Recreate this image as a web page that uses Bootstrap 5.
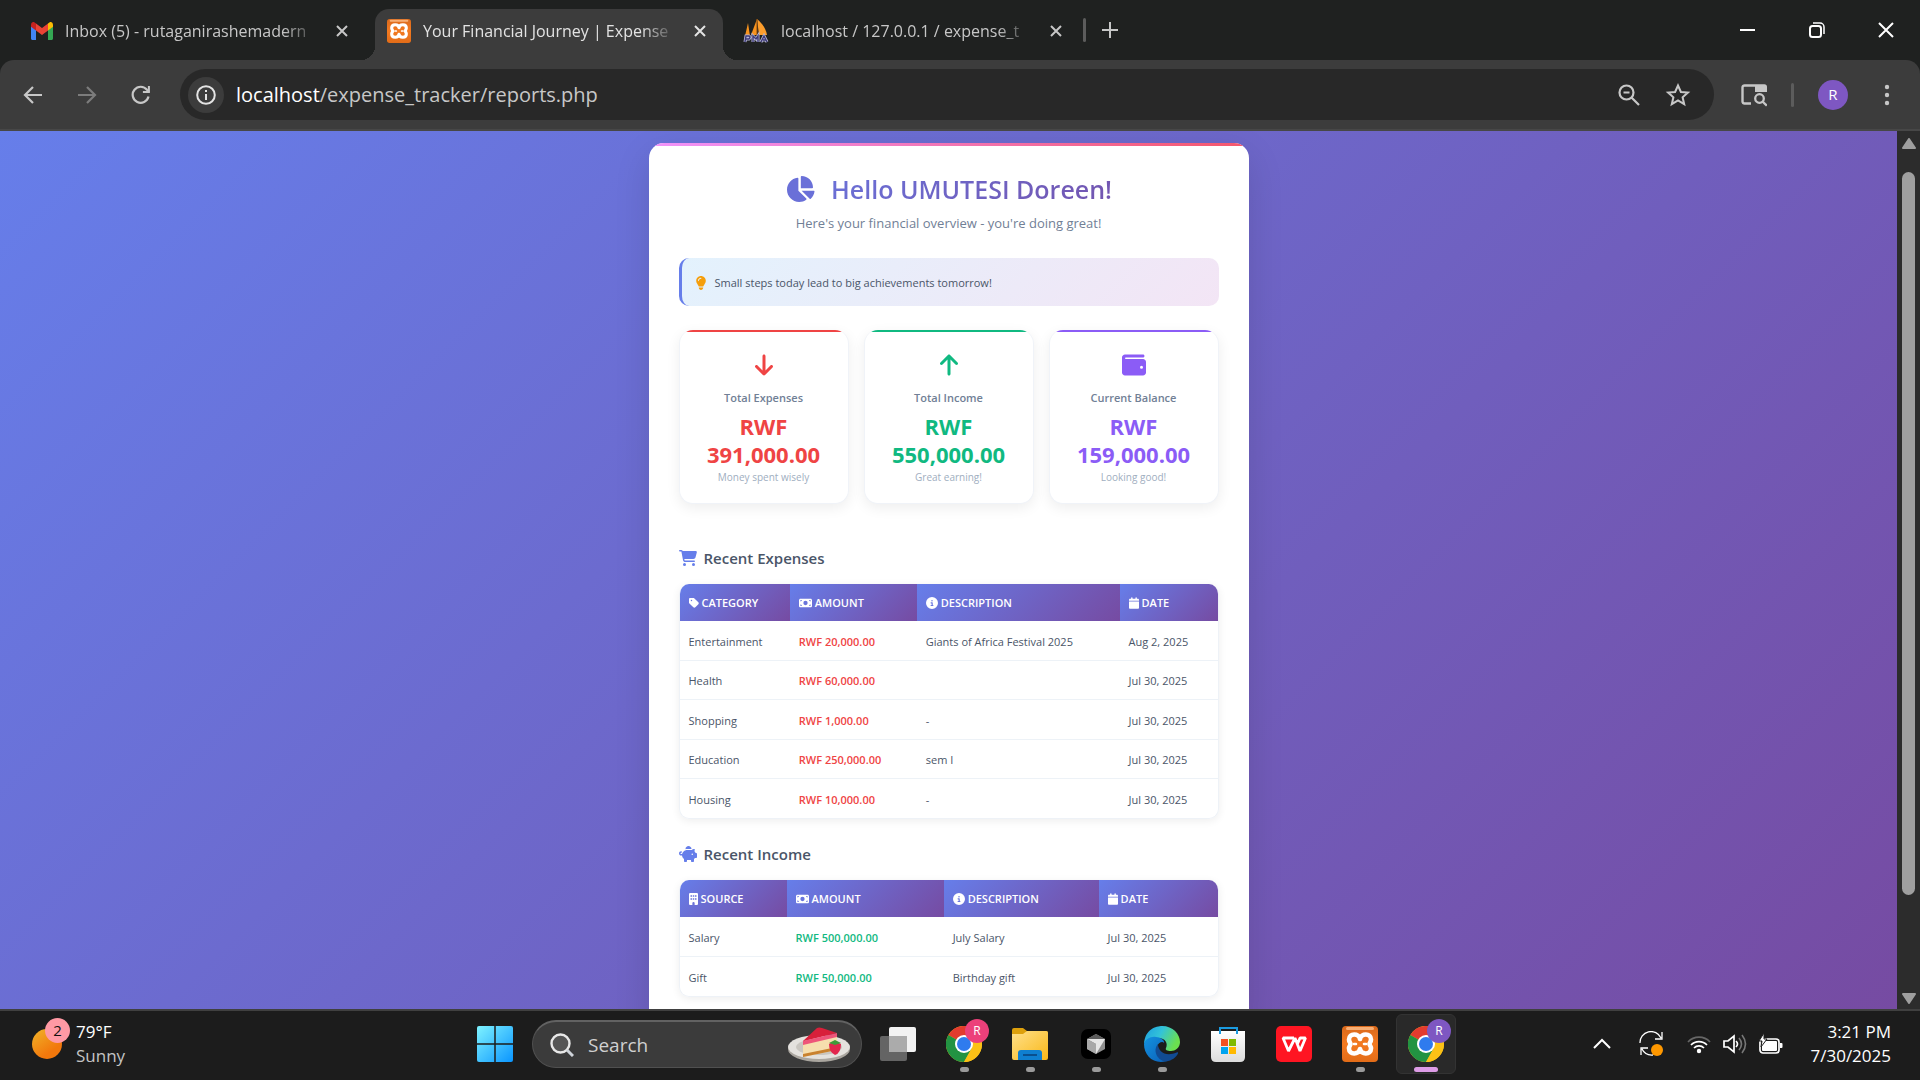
<!DOCTYPE html>
<html lang="en">
<head>
<meta charset="utf-8">
<meta name="viewport" content="width=device-width, initial-scale=1">
<title>Your Financial Journey | Expense Tracker</title>
<link href="https://cdn.jsdelivr.net/npm/bootstrap@5.3.0/dist/css/bootstrap.min.css" rel="stylesheet">
<style>
:root{--grad:linear-gradient(135deg,#667eea 0%,#764ba2 100%)}
body{font-family:"Open Sans","Noto Sans",sans-serif;background:#1f2120;color:#4a5568}
svg{display:block;flex:none}
button{font-family:inherit}
.plain{background:none;border:0;padding:0;color:inherit;display:flex;align-items:center;justify-content:center}

/* browser frame */
.tabstrip{height:60px;color:#c7c7c7;font-size:16px;line-height:24px}
.btab{height:51px;margin-top:9px;padding-bottom:7px;color:inherit;text-decoration:none}
.tab-a{width:375px;padding:0 26px 7px 31px}
.tab-b{width:348px;padding:0 16px 7px 12px;background:#3c3c3c;border-radius:14px 14px 0 0;color:#e3e3e3;position:relative}
.tab-b::before,.tab-b::after{content:"";position:absolute;bottom:0;width:14px;height:14px}
.tab-b::before{left:-14px;background:radial-gradient(circle at 0 0,transparent 14px,#3c3c3c 14px)}
.tab-b::after{right:-14px;background:radial-gradient(circle at 100% 0,transparent 14px,#3c3c3c 14px)}
.tab-c{width:360px;padding:0 20px 7px 20px}
.tabname{flex:1;margin-left:12px;overflow:hidden;white-space:nowrap;-webkit-mask-image:linear-gradient(90deg,#000 calc(100% - 36px),transparent);mask-image:linear-gradient(90deg,#000 calc(100% - 36px),transparent)}
.winctl{width:69px;height:60px;color:#fff}
.toolbar{height:71px;background:#3c3c3c;border-radius:14px 14px 0 0;border-bottom:2px solid #474747;color:#c7c7c7}
.navset{padding:0 12px 0 6px}
.navbtn{width:54px;height:51px}
.omnibox{flex:1;height:51px;border-radius:26px;background:#282828;padding:0 23px 0 8px}
.sitebtn{width:36px;height:36px;border-radius:50%;background:#3c3c3c;color:#e3e3e3}
.url{font-size:20px;line-height:26px;color:#c7c7c7}
.url span{color:#fff}
.rule{width:3px;height:24px;border-radius:2px;background:#5c5c5c}
.toolset{padding:0 30px 0 27px;gap:24px}
.toolset .more{margin-left:12px}
.avatar{width:30px;height:30px;border-radius:50%;background:#7e57c2;color:#fff;font-size:15px}

/* report page */
.view{background:var(--grad);min-height:0;overflow:hidden;padding-top:12px}
.sheet{width:600px;max-width:100%;background:#fff;border-radius:15px 15px 0 0;overflow:hidden;box-shadow:0 12px 36px rgba(0,0,0,.12)}
.sheet::before{content:"";display:block;height:3px;background:linear-gradient(90deg,#f093fb,#f5576c)}
.inner{padding:24px 30px}
.hello{font-size:25px;line-height:38px;font-weight:600;background:var(--grad);-webkit-background-clip:text;background-clip:text;color:transparent;gap:16px;margin:0}
.sub{font-size:13px;line-height:18px;color:#718096;margin:6px 0 26px}
.tip{height:48px;border-left:3px solid #667eea;border-radius:10px;background:linear-gradient(135deg,#e3f2fd,#f3e5f5);font-size:11px;line-height:16px;padding:1px 0 0 13px;gap:8px;color:#4a5568}
.stats{gap:15px;margin-top:24px}
.stat{flex:1;border:1px solid #f0f3f8;border-top:0;border-radius:14px;overflow:hidden;box-shadow:0 4px 14px rgba(0,0,0,.07);height:174px;background:#fff}
.stat::before{content:"";display:block;height:2px;background:currentColor;margin-bottom:21px}
.stat h2{font-size:11px;line-height:16px;font-weight:600;color:#718096;margin:13px 0 6px}
.stat strong{font-size:22px;line-height:28px;font-weight:700;display:block}
.stat p{font-size:10px;line-height:14px;color:#a0aec0;margin:2px 0 0}
.red{color:#ef4444}.green{color:#10b981}.violet{color:#8b5cf6}
.sect{font-size:15px;line-height:20px;font-weight:600;color:#4a5568;gap:7px;margin:44px 0 16px}
.sect svg{color:#667eea}
.sect.next{margin-top:25px}
.ledger{border-radius:10px;overflow:hidden;box-shadow:0 2px 8px rgba(0,0,0,.07);border:1px solid #eef2f7;border-top:0}
.ledger table{width:100%;table-layout:fixed;border-collapse:separate;border-spacing:0;font-size:11px;line-height:16px;margin:0}
.ledger th{height:37px;padding:0 9px;background:var(--grad);color:#fff;font-size:11px;font-weight:600}
.ledger th span{display:flex;align-items:center;gap:3px}
.ledger td{height:39px;padding:2px 9px 0;white-space:nowrap;border-bottom:1px solid #edf2f7}
.ledger tr:nth-child(odd) td{height:40px}
.ledger tr:last-child td{border-bottom:0;height:39px}
.ledger td:nth-child(2){font-weight:600}
.scroller{width:23px;background:#2c2c2c;padding:7px 0 5px;color:#9f9f9f}
.thumb{width:13px;flex:0 0 83.5%;border-radius:7px;background:#9f9f9f;margin-top:23px}

/* taskbar */
.taskbar{height:72px;background:#1c1c1c;border-top:2px solid #404040;padding-bottom:2px;color:#fff}
.side{flex:1 1 0}
.weather{padding-left:30px;font-size:17px;line-height:24px}
.dim{color:#c4c4c4}
.sun{width:30px;height:30px;border-radius:50%;margin-left:2px;background:linear-gradient(145deg,#f0b429,#f2780c 70%)}
.wtext{margin-left:14px}
.count{position:absolute;left:15px;top:-11px;width:25px;height:25px;border-radius:50%;background:#ff99a4;color:#111;font-size:15px;line-height:25px;text-align:center}
.searchbox{width:330px;height:48px;border-radius:24px;background:#3b3b3b;border:1px solid #505050;border-top:2px solid #626262;padding:0 10px 0 17px;margin:0 3px 0 4px}
.searchbox input{background:none;border:0;outline:0;flex:1;min-width:0;color:#d0d0d0;font-size:19px;margin-left:14px;padding:0}
.searchbox input::placeholder{color:#d0d0d0;opacity:1}
.app{width:60px;height:60px;margin:0 3px;border-radius:6px;position:relative;border:1px solid transparent}
.app.open::after{content:"";position:absolute;bottom:1px;left:50%;margin-left:-4px;width:9px;height:5px;border-radius:3px;background:#9a9a9a}
.app.live{background:#292929;border-color:#333}
.app.live::after{width:24px;margin-left:-12px;background:#dd9ce6}
.who{position:absolute;right:4px;top:4px;width:24px;height:24px;border-radius:50%;font-size:12px;line-height:24px;color:#fff;background:#ec407a;text-align:center}
.live .who{background:#7e57c2}
.tray{padding-right:29px}
.status{gap:12px}
.clock{font-size:17px;line-height:24px;text-align:right;margin-left:27px}
</style>
<script src="https://cdn.jsdelivr.net/npm/bootstrap@5.3.0/dist/js/bootstrap.bundle.min.js"></script>
</head>
<body class="vh-100 d-flex flex-column overflow-hidden">

<svg width="0" height="0" class="position-absolute" aria-hidden="true">
 <defs>
  <linearGradient id="orange" x1="0" y1="0" x2="0" y2="1"><stop offset="0" stop-color="#d9691c"/><stop offset=".5" stop-color="#f47a20"/><stop offset="1" stop-color="#e26c18"/></linearGradient>
  <linearGradient id="win" x1="0" y1="0" x2="1" y2="1"><stop offset="0" stop-color="#7ff3ff"/><stop offset="1" stop-color="#0a95ff"/></linearGradient>
  <linearGradient id="fold" x1="0" y1="0" x2="1" y2="1"><stop offset="0" stop-color="#ffe08a"/><stop offset="1" stop-color="#f9b818"/></linearGradient>
  <linearGradient id="edgeTop" x1="0" y1="0" x2="1" y2=".4"><stop offset="0" stop-color="#1b9de2"/><stop offset=".5" stop-color="#33c3d8"/><stop offset="1" stop-color="#6be04f"/></linearGradient>
  <linearGradient id="edgeLow" x1="0" y1="0" x2="1" y2="1"><stop offset="0" stop-color="#1392e0"/><stop offset="1" stop-color="#0b60b8"/></linearGradient>
  <linearGradient id="bag" x1="0" y1="0" x2="0" y2="1"><stop offset="0" stop-color="#fff"/><stop offset="1" stop-color="#dcdcdc"/></linearGradient>
  <symbol id="i-close" viewBox="0 0 14 14"><path d="M2 2l10 10M12 2L2 12" stroke="currentColor" stroke-width="2" fill="none"/></symbol>
  <symbol id="i-xampp" viewBox="0 0 36 36"><rect width="36" height="36" rx="4" fill="url(#orange)"/><rect x="4" y="1" width="28" height="3" rx="1.5" fill="#ffc08c" opacity=".8"/><path d="M18 13C17 7 7 7 7 13.500c0 2.500 1.500 3 1.500 4.500S7 20 7 22.500c0 6.500 10 6.500 11 .5 1 6 11 6 11-.5 0-2.500-1.500-3-1.500-4.500s1.500-2 1.500-4.500c0-6.500-10-6.500-11-.5z" fill="none" stroke="#fff" stroke-width="4.600" stroke-linejoin="round"/><path d="M12 18h2M22 18h2" stroke="#fff" stroke-width="2.600" stroke-linecap="round"/></symbol>
  <symbol id="i-chrome" viewBox="0 0 36 36"><circle cx="18" cy="18" r="18" fill="#fbc116"/><path d="M18 18L2.400 9A18 18 0 0 1 33.600 9z" fill="#e33b2e"/><path d="M18 18L2.400 9a18 18 0 0 0 15.600 27l8-13.500z" fill="#229342"/><path d="M18 9.500h15.900A18 18 0 0 1 18 36l7.400-13.500z" fill="#fbc116"/><circle cx="18" cy="18" r="9" fill="#fff"/><circle cx="18" cy="18" r="7" fill="#2f7bee"/></symbol>
  <symbol id="i-bill" viewBox="0 0 576 512"><path fill="currentColor" d="M64 64C28.700 64 0 92.700 0 128V384c0 35.300 28.700 64 64 64H512c35.300 0 64-28.700 64-64V128c0-35.300-28.700-64-64-64H64zm64 320H64V320c35.300 0 64 28.700 64 64zM64 192V128h64c0 35.300-28.700 64-64 64zM448 384c0-35.300 28.700-64 64-64v64H448zm64-192c-35.300 0-64-28.700-64-64h64v64zM288 160a96 96 0 1 1 0 192 96 96 0 1 1 0-192z"/></symbol>
  <symbol id="i-info" viewBox="0 0 512 512"><path fill="currentColor" d="M256 512A256 256 0 1 0 256 0a256 256 0 1 0 0 512zM216 336h24V272H216c-13.300 0-24-10.700-24-24s10.700-24 24-24h48c13.300 0 24 10.700 24 24v88h8c13.300 0 24 10.700 24 24s-10.700 24-24 24H216c-13.300 0-24-10.700-24-24s10.700-24 24-24zm40-208a32 32 0 1 1 0 64 32 32 0 1 1 0-64z"/></symbol>
  <symbol id="i-cal" viewBox="0 0 448 512"><path fill="currentColor" d="M96 32V64H48C21.500 64 0 85.500 0 112v48H448V112c0-26.500-21.500-48-48-48H352V32c0-17.700-14.300-32-32-32s-32 14.300-32 32V64H160V32c0-17.700-14.300-32-32-32S96 14.300 96 32zM448 192H0V464c0 26.500 21.500 48 48 48H400c26.500 0 48-21.500 48-48V192z"/></symbol>
 </defs>
</svg>

<header>
 <div class="tabstrip d-flex">
  <a href="#" class="btab tab-a d-flex align-items-center">
   <svg width="22" height="18" viewBox="0 0 22 18"><path d="M0 3v13.500C0 17.300.7 18 1.500 18H5V7z" fill="#4285f4"/><path d="M22 3v13.500c0 .8-.7 1.500-1.500 1.500H17V7z" fill="#34a853"/><path d="M5 1.500v7l6 4.500 6-4.500v-7L11 6z" fill="#ea4335"/><path d="M0 3v1.700l5 3.800v-7L3.600.5C2.100-.6 0 .4 0 3z" fill="#c5221f"/><path d="M22 3v1.700l-5 3.800v-7l1.400-1C19.900-.6 22 .4 22 3z" fill="#fbbc04"/></svg>
   <span class="tabname">Inbox (5) - rutaganirashemadern</span>
   <button class="plain ms-3" aria-label="Close tab"><svg width="14" height="14"><use href="#i-close"/></svg></button>
  </a>
  <a href="#" class="btab tab-b d-flex align-items-center">
   <svg width="24" height="24"><use href="#i-xampp"/></svg>
   <span class="tabname">Your Financial Journey | Expense</span>
   <button class="plain ms-3" aria-label="Close tab"><svg width="14" height="14"><use href="#i-close"/></svg></button>
  </a>
  <a href="#" class="btab tab-c d-flex align-items-center">
   <svg width="26" height="24" viewBox="0 0 26 24"><path d="M5 4L2 17h5z M14 0L8 16h6z" fill="#f7931e"/><path d="M14 0l2 16h8c-1-6-5-12-10-16z" fill="#fb9d2c"/><path d="M14 0v16" stroke="#8a4b0a"/><path d="M2 23l1-6h3q2 1 0 3H3m7 3v-6l3 3 2-3v6m3 0l3-6 3 6m-4-2h3" fill="none" stroke="#b8b8d8" stroke-width="3"/><path d="M2 23l1-6h3q2 1 0 3H3m7 3v-6l3 3 2-3v6m3 0l3-6 3 6m-4-2h3" fill="none" stroke="#3d3a78" stroke-width="1.400"/></svg>
   <span class="tabname">localhost / 127.0.0.1 / expense_t</span>
   <button class="plain ms-3" aria-label="Close tab"><svg width="14" height="14"><use href="#i-close"/></svg></button>
  </a>
  <div class="d-flex align-items-center"><span class="rule"></span>
   <button class="plain ms-3" aria-label="New tab"><svg width="16" height="16" viewBox="0 0 16 16"><path d="M8 0v16M0 8h16" stroke="currentColor" stroke-width="2"/></svg></button></div>
  <div class="d-flex ms-auto">
   <button class="plain winctl" aria-label="Minimize"><svg width="15" height="15"><path d="M0 7h15" stroke="#fff" stroke-width="2"/></svg></button>
   <button class="plain winctl" aria-label="Restore"><svg width="16" height="16" viewBox="0 0 16 16"><rect x="1" y="4" width="11" height="11" rx="2.500" fill="none" stroke="#fff" stroke-width="2"/><path d="M4 1h7a4 4 0 0 1 4 4v7" fill="none" stroke="#fff" stroke-width="1.500"/></svg></button>
   <button class="plain winctl" aria-label="Close"><svg width="16" height="16"><path d="M1 1l14 14M15 1L1 15" stroke="#fff" stroke-width="2"/></svg></button>
  </div>
 </div>
 <div class="toolbar d-flex align-items-center">
  <div class="navset d-flex">
   <button class="plain navbtn" aria-label="Back"><svg width="20" height="20" viewBox="0 0 20 20"><path d="M19 10H2M10 2l-8 8 8 8" fill="none" stroke="currentColor" stroke-width="2.200"/></svg></button>
   <button class="plain navbtn" aria-label="Forward"><svg width="20" height="20" viewBox="0 0 20 20"><path d="M1 10h17M10 2l8 8-8 8" fill="none" stroke="#7c7c7c" stroke-width="2.200"/></svg></button>
   <button class="plain navbtn" aria-label="Reload"><svg width="20" height="20" viewBox="0 0 20 20"><path d="M17.500 11.500A8 8 0 1 1 16 4.800L18 7" fill="none" stroke="currentColor" stroke-width="2.200"/><path d="M18.900 1v7h-7V6h5V1z" fill="currentColor"/></svg></button>
  </div>
  <div class="omnibox d-flex align-items-center">
   <button class="plain sitebtn" aria-label="Site information"><svg width="20" height="20" viewBox="0 0 20 20"><circle cx="10" cy="10" r="8.800" fill="none" stroke="currentColor" stroke-width="2"/><path d="M10 9v6M10 5v2" stroke="currentColor" stroke-width="2"/></svg></button>
   <div class="url ms-2 ps-1"><span>localhost</span>/expense_tracker/reports.php</div>
   <button class="plain ms-auto" aria-label="Zoom"><svg width="24" height="24" viewBox="0 0 24 24"><circle cx="9.500" cy="9.500" r="7" fill="none" stroke="currentColor" stroke-width="2.200"/><path d="M6.500 9.500h6M14.500 14.500L22 22" stroke="currentColor" stroke-width="2.200"/></svg></button>
   <button class="plain ms-4" aria-label="Bookmark"><svg width="26" height="26" viewBox="0 0 26 26"><path d="M13 3.500l2.900 6.500 7 .6-5.300 4.700 1.600 6.900-6.200-3.700-6.200 3.700 1.600-6.900L3.100 10.600l7-.6z" fill="none" stroke="currentColor" stroke-width="2"/></svg></button>
  </div>
  <div class="toolset d-flex align-items-center">
   <button class="plain" aria-label="Side panel"><svg width="26" height="24" viewBox="0 0 26 24"><path d="M10 20.500H3.500c-1 0-2-.7-2-2V4.500c0-1.300 1-2 2-2H14" fill="none" stroke="currentColor" stroke-width="2.400"/><path d="M14 1.300h9.500c1.400 0 2.500 1 2.500 2.500V9H14z" fill="currentColor"/><circle cx="18.500" cy="15.500" r="4.300" fill="none" stroke="currentColor" stroke-width="2.300"/><path d="M21.500 18.500l4.300 4.300" stroke="currentColor" stroke-width="2.300"/></svg></button>
   <span class="rule"></span>
   <button class="plain avatar" aria-label="Profile">R</button>
   <button class="plain more" aria-label="Menu"><svg width="6" height="22"><circle cx="3" cy="3" r="2.200" fill="currentColor"/><circle cx="3" cy="11" r="2.200" fill="currentColor"/><circle cx="3" cy="19" r="2.200" fill="currentColor"/></svg></button>
  </div>
 </div>
</header>

<div class="d-flex flex-fill overflow-hidden">
 <main class="view flex-fill">
  <div class="sheet mx-auto"><div class="inner">
   <h1 class="hello d-flex justify-content-center align-items-center"><svg width="30" height="26" viewBox="0 0 576 512"><path fill="#6a70d8" d="M304 240V16.600c0-9 7-16.600 16-16.600C443.700 0 544 100.300 544 224c0 9-7.600 16-16.600 16H304zM32 272C32 150.700 122.100 50.300 239 34.300c9.200-1.300 17 6.100 17 15.400V288L412.500 444.500c6.700 6.700 6.200 17.700-1.500 23.100C371.800 495.600 323.800 512 272 512C139.500 512 32 404.600 32 272zm526.400 16c9.300 0 16.600 7.800 15.400 17c-7.700 55.900-34.600 105.600-73.900 142.300c-6 5.600-15.400 5.200-21.200-.7L320 288H558.400z"/></svg>Hello UMUTESI Doreen!</h1>
   <p class="sub text-center">Here's your financial overview - you're doing great!</p>
   <div class="tip d-flex align-items-center"><svg width="12" height="14" viewBox="0 0 384 512"><path fill="#f59e0b" d="M272 384c9.600-31.900 29.500-59.100 49.200-86.200c5.200-7.100 10.400-14.200 15.400-21.400c19.800-28.500 31.400-63 31.400-100.300C368 78.800 289.200 0 192 0S16 78.800 16 176c0 37.300 11.600 71.900 31.400 100.300c5 7.200 10.200 14.300 15.400 21.400c19.800 27.100 39.700 54.400 49.200 86.200H272zM192 512c44.200 0 80-35.800 80-80V416H112v16c0 44.200 35.800 80 80 80zM112 176c0 8.800-7.200 16-16 16s-16-7.200-16-16c0-61.900 50.100-112 112-112c8.800 0 16 7.200 16 16s-7.200 16-16 16c-44.200 0-80 35.800-80 80z"/></svg>Small steps today lead to big achievements tomorrow!</div>

   <div class="stats d-flex text-center">
    <section class="stat red"><svg class="mx-auto" width="24" height="24" viewBox="0 0 384 512"><path fill="currentColor" d="M169.400 470.600c12.500 12.500 32.800 12.500 45.300 0l160-160c12.500-12.500 12.500-32.800 0-45.300s-32.800-12.500-45.300 0L224 370.800 224 64c0-17.700-14.300-32-32-32s-32 14.300-32 32l0 306.700L54.600 265.400c-12.500-12.500-32.800-12.500-45.300 0s-12.500 32.800 0 45.300l160 160z"/></svg>
     <h2>Total Expenses</h2><strong>RWF<br>391,000.00</strong><p>Money spent wisely</p></section>
    <section class="stat green"><svg class="mx-auto" width="24" height="24" viewBox="0 0 384 512"><path fill="currentColor" d="M214.600 41.400c-12.500-12.500-32.800-12.500-45.300 0l-160 160c-12.500 12.500-12.500 32.800 0 45.300s32.800 12.500 45.300 0L160 141.200V448c0 17.700 14.300 32 32 32s32-14.300 32-32V141.200L329.400 246.600c12.500 12.500 32.800 12.500 45.300 0s12.500-32.800 0-45.300l-160-160z"/></svg>
     <h2>Total Income</h2><strong>RWF<br>550,000.00</strong><p>Great earning!</p></section>
    <section class="stat violet"><svg class="mx-auto" width="24" height="24" viewBox="0 0 512 512"><path fill="currentColor" d="M64 32C28.700 32 0 60.700 0 96V416c0 35.300 28.700 64 64 64H448c35.300 0 64-28.700 64-64V192c0-35.300-28.700-64-64-64H80c-8.800 0-16-7.200-16-16s7.200-16 16-16H448c17.700 0 32-14.300 32-32s-14.300-32-32-32H64zM416 272a32 32 0 1 1 0 64 32 32 0 1 1 0-64z"/></svg>
     <h2>Current Balance</h2><strong>RWF<br>159,000.00</strong><p>Looking good!</p></section>
   </div>

   <h2 class="sect d-flex align-items-center"><svg width="18" height="16" viewBox="0 0 576 512"><path fill="currentColor" d="M0 24C0 10.700 10.700 0 24 0H69.500c22 0 41.500 12.800 50.600 32h411c26.300 0 45.500 25 38.600 50.400l-41 152.300c-8.500 31.400-37 53.300-69.500 53.300H170.700l5.400 28.500c2.200 11.300 12.100 19.500 23.600 19.500H488c13.300 0 24 10.700 24 24s-10.700 24-24 24H199.700c-34.600 0-64.300-24.600-70.700-58.500L77.400 54.500c-.7-3.800-4-6.500-7.900-6.500H24C10.700 48 0 37.300 0 24zM128 464a48 48 0 1 1 96 0 48 48 0 1 1 -96 0zm336-48a48 48 0 1 1 0 96 48 48 0 1 1 0-96z"/></svg>Recent Expenses</h2>
   <div class="ledger"><table>
    <colgroup><col style="width:20.500%"><col style="width:23.600%"><col style="width:37.700%"><col></colgroup>
    <thead><tr>
     <th><span><svg width="10" height="12" viewBox="0 0 448 512"><path fill="currentColor" d="M0 80V229.500c0 17 6.700 33.300 18.700 45.300l176 176c25 25 65.500 25 90.500 0L418.700 317.300c25-25 25-65.500 0-90.500l-176-176c-12-12-28.300-18.700-45.300-18.700H48C21.500 32 0 53.500 0 80zm112 32a32 32 0 1 1 0 64 32 32 0 1 1 0-64z"/></svg>CATEGORY</span></th>
     <th><span><svg width="13" height="12"><use href="#i-bill"/></svg>AMOUNT</span></th>
     <th><span><svg width="12" height="12"><use href="#i-info"/></svg>DESCRIPTION</span></th>
     <th><span><svg width="10" height="12"><use href="#i-cal"/></svg>DATE</span></th></tr></thead>
    <tbody>
     <tr><td>Entertainment</td><td class="red">RWF 20,000.00</td><td>Giants of Africa Festival 2025</td><td>Aug 2, 2025</td></tr>
     <tr><td>Health</td><td class="red">RWF 60,000.00</td><td></td><td>Jul 30, 2025</td></tr>
     <tr><td>Shopping</td><td class="red">RWF 1,000.00</td><td>-</td><td>Jul 30, 2025</td></tr>
     <tr><td>Education</td><td class="red">RWF 250,000.00</td><td>sem I</td><td>Jul 30, 2025</td></tr>
     <tr><td>Housing</td><td class="red">RWF 10,000.00</td><td>-</td><td>Jul 30, 2025</td></tr>
    </tbody></table></div>

   <h2 class="sect next d-flex align-items-center"><svg width="18" height="16" viewBox="0 0 576 512"><path fill="currentColor" d="M400 96l0 .7c-5.300-.4-10.600-.7-16-.7H256c-16.500 0-32.500 2.100-47.800 6c-.1-2-.2-4-.2-6c0-53 43-96 96-96s96 43 96 96zm-16 32c3.500 0 7 .1 10.400 .3c4.200 .3 8.400 .7 12.600 1.300C424.600 109.100 450.800 96 480 96h11.500c10.400 0 18 9.800 15.500 19.900l-13.800 55.200c15.800 14.800 28.700 32.800 37.500 52.900H544c17.700 0 32 14.300 32 32v96c0 17.700-14.300 32-32 32H512c-9.100 12.100-19.900 22.900-32 32v64c0 17.700-14.300 32-32 32H416c-17.700 0-32-14.300-32-32V448H256v32c0 17.700-14.300 32-32 32H192c-17.700 0-32-14.300-32-32V416c-34.900-26.200-58.700-66.300-63.200-112H68c-37.600 0-68-30.400-68-68s30.400-68 68-68h4c13.300 0 24 10.700 24 24s-10.700 24-24 24H68c-11 0-20 9-20 20s9 20 20 20H99.200c12.100-59.800 57.700-107.500 116.300-122.800c12.900-3.400 26.500-5.200 40.500-5.200H384zm64 136a24 24 0 1 0 -48 0 24 24 0 1 0 48 0z"/></svg>Recent Income</h2>
   <div class="ledger"><table>
    <colgroup><col style="width:19.900%"><col style="width:29.200%"><col style="width:28.800%"><col></colgroup>
    <thead><tr>
     <th><span><svg width="9" height="12" viewBox="0 0 384 512"><path fill="currentColor" fill-rule="evenodd" d="M48 0h288q48 0 48 48v416q0 48-48 48h-96v-80q0-48-48-48t-48 48v80H48q-48 0-48-48V48Q0 0 48 0zM64 96v64h64V96zm96 0v64h64V96zm96 0v64h64V96zM64 224v64h64v-64zm96 0v64h64v-64zm96 0v64h64v-64z"/></svg>SOURCE</span></th>
     <th><span><svg width="13" height="12"><use href="#i-bill"/></svg>AMOUNT</span></th>
     <th><span><svg width="12" height="12"><use href="#i-info"/></svg>DESCRIPTION</span></th>
     <th><span><svg width="10" height="12"><use href="#i-cal"/></svg>DATE</span></th></tr></thead>
    <tbody>
     <tr><td>Salary</td><td class="green">RWF 500,000.00</td><td>July Salary</td><td>Jul 30, 2025</td></tr>
     <tr><td>Gift</td><td class="green">RWF 50,000.00</td><td>Birthday gift</td><td>Jul 30, 2025</td></tr>
    </tbody></table></div>
  </div></div>
 </main>
 <div class="scroller d-flex flex-column align-items-center">
  <svg width="14" height="11"><path d="M7 1l6 9H1z" fill="currentColor" stroke="currentColor" stroke-width="2" stroke-linejoin="round"/></svg>
  <div class="thumb"></div>
  <svg class="mt-auto" width="14" height="11"><path d="M7 10L1 1h12z" fill="currentColor" stroke="currentColor" stroke-width="2" stroke-linejoin="round"/></svg>
 </div>
</div>

<footer class="taskbar d-flex align-items-center">
 <div class="side weather d-flex align-items-center"><div class="position-relative"><div class="sun"></div><span class="count">2</span></div><div class="wtext"><div>79°F</div><div class="dim">Sunny</div></div></div>
 <div class="d-flex align-items-center">
  <button class="plain app" aria-label="Start"><svg width="36" height="36"><rect width="36" height="36" rx="2" fill="url(#win)"/><path d="M18 0v36M0 18h36" stroke="#1c1c1c" stroke-width="1.500"/></svg></button>
  <div class="searchbox d-flex align-items-center">
   <svg width="24" height="24" viewBox="0 0 24 24"><circle cx="10.500" cy="10.500" r="9" fill="#555" stroke="#e8e8e8" stroke-width="2.400"/><path d="M17 17l6 6" stroke="#cfd4da" stroke-width="3"/></svg>
   <input type="text" placeholder="Search" aria-label="Search">
   <svg width="64" height="36" viewBox="0 0 64 36"><ellipse cx="32" cy="22" rx="31" ry="13" fill="#aaa69f"/><ellipse cx="32" cy="20" rx="31" ry="12" fill="#e4e2de"/><ellipse cx="32" cy="20" rx="23" ry="8" fill="#c9c6c0"/><path d="M16 15l34-6v14L16 30z" fill="#f6dfae"/><path d="M16 27l34-7v3L16 30z" fill="#c9822f"/><path d="M16 14L30 1q2-1 5 0l15 5-33 8z" fill="#d8203a"/><path d="M16 14l34-8v4l-34 8z" fill="#ee5579"/><path d="M42 17q5-4 12 0 0 9-6 11-6-3-6-11z" fill="#e2264d"/><path d="M42 16l6-3 6 3-6 2z" fill="#3f9a3a"/></svg>
  </div>
  <button class="plain app" aria-label="Task view"><svg width="36" height="36"><rect y="10" width="27" height="25" rx="2" fill="#646464"/><rect x="9" y="1" width="27" height="25" rx="2" fill="#f2f2f2"/><path d="M9 10h18v16H9z" fill="#ababab"/></svg></button>
  <button class="plain app open" aria-label="Chrome"><svg width="36" height="36"><use href="#i-chrome"/></svg><span class="who">R</span></button>
  <button class="plain app open" aria-label="File Explorer"><svg width="36" height="36"><path d="M0 12V4q0-2 2-2h9l4 3h19q2 0 2 2v5z" fill="#dda00c"/><path d="M0 8h11l4-3h19q2 0 2 2v25q0 2-2 2H2q-2 0-2-2z" fill="url(#fold)"/><path d="M6 34V27q0-3 3-3h18q3 0 3 3v7z" fill="#0f7fd0"/><path d="M11 29h14" stroke="#0a4f8e" stroke-width="2"/></svg></button>
  <button class="plain app open" aria-label="Cursor"><svg width="30" height="30"><rect width="30" height="30" rx="7" fill="#000"/><path d="M15 5l9 5v10l-9 5-9-5V10z" fill="#8f8f8f"/><path d="M15 5l9 5-9 5-9-5z" fill="#5c5c5c"/><path d="M6 10h18l-9 15V15z" fill="#e6e6e6"/><path d="M6 10l9 5v10l-9-5z" fill="#a8a8a8"/></svg></button>
  <button class="plain app open" aria-label="Edge"><svg width="36" height="36" viewBox="0 0 36 36"><path d="M0 18C1 3 12 0 18 0c11 0 18 8 18 16 0 6-5 9-9 9-4 0-6-1-5-3 2-4 0-10-8-10C7 12 1 15 0 18z" fill="url(#edgeTop)"/><path d="M0 18c1-5 7-8 12-7 5 0 9 4 8 6-1-2-6-1-7 4-1 6 6 15 10 14C10 39 0 30 0 18z" fill="url(#edgeLow)"/><path d="M14 18c-6 7 0 17 8 17.500 6-1 10-4 12-8 .5-1-.5-1.500-1.300-1C22 31 14 26 14 18z" fill="#114b93"/></svg></button>
  <button class="plain app" aria-label="Microsoft Store"><svg width="36" height="36"><path d="M1 5h34v26q0 5-5 5H6q-5 0-5-5z" fill="url(#bag)"/><path d="M10 8V2h17v6" fill="none" stroke="#1b9be0" stroke-width="2"/><path d="M11 13h7v7h-7z" fill="#f25022"/><path d="M19 13h7v7h-7z" fill="#7fba00"/><path d="M11 21h7v7h-7z" fill="#00a4ef"/><path d="M19 21h7v7h-7z" fill="#ffb900"/></svg></button>
  <button class="plain app" aria-label="WPS Office"><svg width="36" height="36"><rect width="36" height="36" rx="5" fill="#ff1522"/><path d="M18 12H7l5.500 13L19 12l5 13 5.500-13H24l-3 7" fill="none" stroke="#fff" stroke-width="2.800" stroke-linejoin="bevel"/></svg></button>
  <button class="plain app open" aria-label="XAMPP"><svg width="36" height="36"><use href="#i-xampp"/></svg></button>
  <button class="plain app open live" aria-label="Chrome window"><svg width="36" height="36"><use href="#i-chrome"/></svg><span class="who">R</span></button>
 </div>
 <div class="side tray d-flex align-items-center justify-content-end">
  <svg width="18" height="12"><path d="M1 10l8-8 8 8" fill="none" stroke="#fff" stroke-width="2"/></svg>
  <svg class="ms-4 me-3" width="32" height="26" viewBox="-4 0 32 26"><path d="M1 12A11 11 0 0 1 22 7M23 1v7h-7M2 24v-7h7M3 18a11 11 0 0 0 11 6" fill="none" stroke="#fff" stroke-width="1.300"/><circle cx="18" cy="19" r="6" fill="#ff9800"/></svg>
  <div class="status d-flex align-items-center ms-1">
   <svg width="24" height="20" viewBox="0 0 24 20"><path d="M1 8a15 15 0 0 1 22 0" fill="none" stroke="#666" stroke-width="1.700"/><path d="M4 11a11 11 0 0 1 16 0M7 14a7 7 0 0 1 10 0" fill="none" stroke="#fff" stroke-width="1.700"/><circle cx="12" cy="17" r="2.200" fill="#fff"/></svg>
   <svg width="24" height="20" viewBox="0 0 24 20"><path d="M1 7h4l6-5v16l-6-5H1z" fill="none" stroke="#fff" stroke-width="1.700"/><path d="M13 7q3 3 0 6" fill="none" stroke="#fff" stroke-width="1.600"/><path d="M16 4q5 6 0 12M19 1q7 9 0 18" fill="none" stroke="#777" stroke-width="1.600"/></svg>
   <svg width="24" height="22" viewBox="0 -2 24 22"><rect x="1" y="4" width="19" height="14" rx="3" fill="none" stroke="#fff" stroke-width="1.700"/><rect x="3" y="6" width="15" height="10" rx="1" fill="#fff"/><path d="M21 8h1.500q1 0 1 1v3q0 1-1 1H21z" fill="#fff"/><path d="M5-2L0 6h3l-1 6 6-8H5z" fill="#fff" stroke="#1c1c1c" stroke-width="1"/></svg>
  </div>
  <div class="clock"><div>3:21 PM</div><div>7/30/2025</div></div>
 </div>
</footer>
</body>
</html>
